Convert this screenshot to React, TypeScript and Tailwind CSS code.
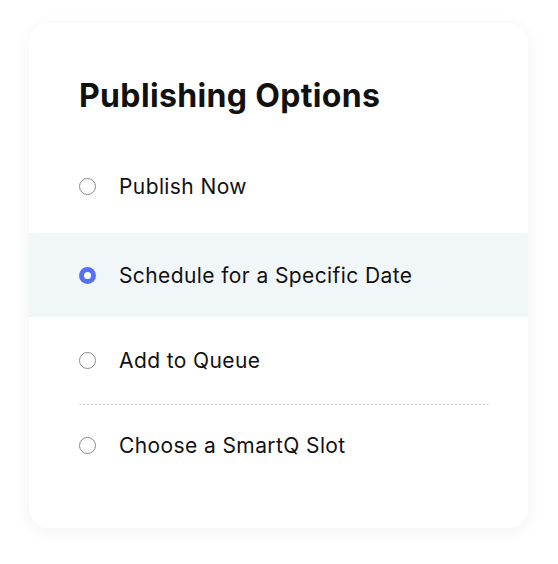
import React from "react";

function Radio({ checked }: { checked?: boolean }) {
  return checked ? (
    <span className="flex h-[17px] w-[17px] shrink-0 items-center justify-center rounded-full bg-[#5470f6]">
      <span className="h-[7px] w-[7px] rounded-full bg-white" />
    </span>
  ) : (
    <span className="h-[17px] w-[17px] shrink-0 rounded-full border border-[#8a8a8a] bg-white" />
  );
}

function Row({ label, checked, className = "" }: { label: string; checked?: boolean; className?: string }) {
  return (
    <div className={`flex items-center pl-[50px] ${checked ? "bg-[#f1f6f9]" : ""} ${className}`}>
      <Radio checked={checked} />
      <span className="ml-[23px] text-[21px] tracking-[0.4px] text-[#111] leading-none">{label}</span>
    </div>
  );
}

export default function App() {
  return (
    <div className="h-[564px] w-[558px] bg-white pl-[29px] pt-[23px]" style={{ fontFamily: "Inter, 'Noto Sans', sans-serif" }}>
      <div className="h-[505px] w-[499px] rounded-[20px] bg-white shadow-[0_3px_14px_4px_rgba(0,0,0,0.035)]">
        <h1 className="pl-[50px] pt-[55px] text-[32px] font-bold leading-[36px] tracking-[0.35px] text-[#111]">Publishing Options</h1>
        <Row label="Publish Now" className="mt-[30px] h-[84px]" />
        <Row label="Schedule for a Specific Date" checked className="mt-[5px] h-[84px]" />
        <Row label="Add to Queue" className="h-[87px]" />
        <div className="ml-[50px] mr-[38px] h-px bg-[linear-gradient(to_right,#d4d4d4_50%,transparent_50%)] bg-[length:4px_1px]" />
        <Row label="Choose a SmartQ Slot" className="h-[80px]" />
      </div>
    </div>
  );
}
